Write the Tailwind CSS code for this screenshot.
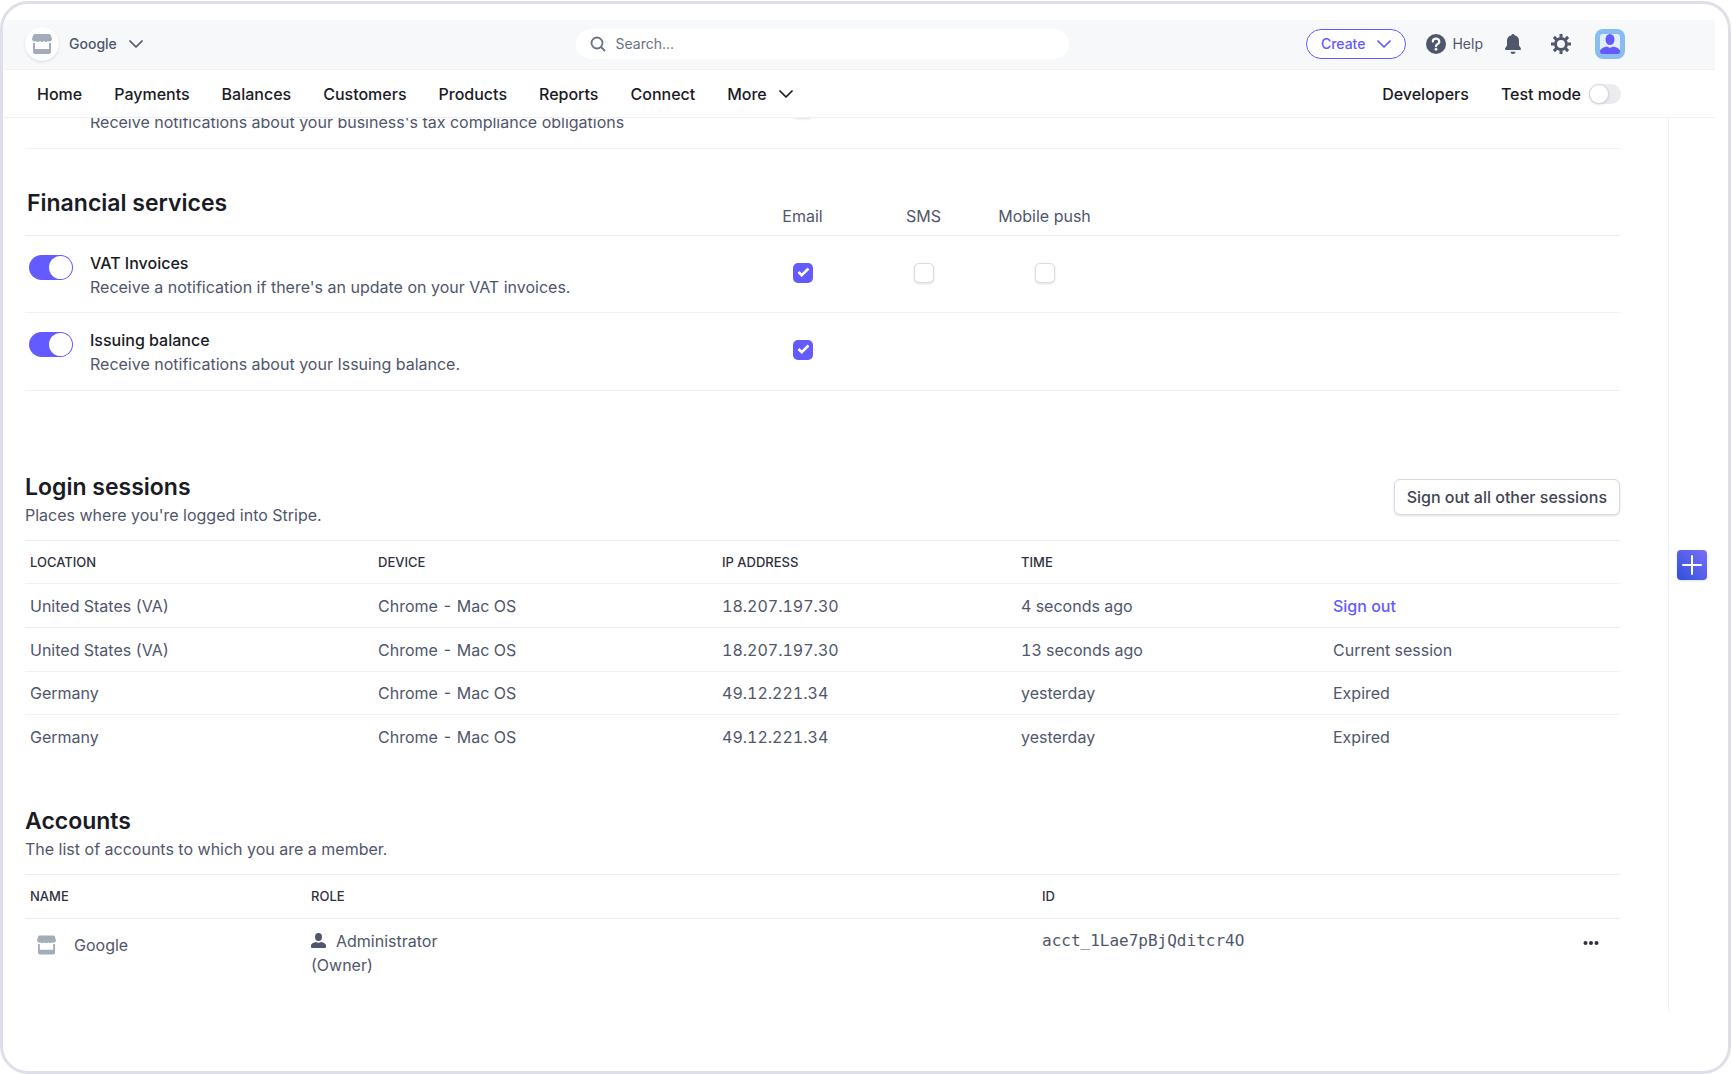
<!DOCTYPE html>
<html lang="en">
<head>
    <meta charset="UTF-8">
    <meta name="viewport" content="width=device-width, initial-scale=1.0">
    <title>Profile settings</title>
    <script src="https://cdn.jsdelivr.net/npm/@tailwindcss/browser@4"></script>
</head>
<body class="bg-white font-['Inter',sans-serif] text-base text-[#50566b]">

    <!-- Window frame -->
    <div class="min-h-screen pt-px pr-px flex">
        <div class="flex-1 flex flex-col border-3 border-[#dfdfe9] rounded-[28px] pt-4 pr-[13px] pb-[60px] overflow-hidden">

            <!-- Top bar -->
            <header class="h-[50px] grid grid-cols-[1fr_493px_1fr] items-center bg-[#f6f8fa] border-b border-[#f0f2f5] pl-4 pr-[90px] pb-px">
                <div class="flex items-center pl-1.5">
                    <span class="w-[34px] h-[34px] rounded-full bg-white shadow flex items-center justify-center">
                        <svg class="w-5 h-5" viewBox="0 0 20 20" fill="#a3acb9"><path d="M3 0h14a2 2 0 0 1 1.900 1.500L20 5a2.500 2.500 0 0 1-4 2 2.800 2.800 0 0 1-4 0 2.800 2.800 0 0 1-4 0 2.800 2.800 0 0 1-4 0 2.500 2.500 0 0 1-4-2l1.100-3.500A2 2 0 0 1 3 0z"/><path d="M1 9h2v6h14V9h2v9a2 2 0 0 1-2 2H3a2 2 0 0 1-2-2z"/></svg>
                    </span>
                    <button type="button" class="ml-2.5 flex items-center gap-3 text-sm font-medium">
                        Google
                        <svg class="w-3.5 h-2" viewBox="0 0 14 8" fill="none" stroke="currentColor" stroke-width="1.700" stroke-linecap="round" stroke-linejoin="round"><path d="M1 1l6 6 6-6"/></svg>
                    </button>
                </div>

                <label class="h-[30px] flex items-center gap-2.5 bg-white rounded-full px-3.5">
                    <svg class="w-4 h-4 shrink-0" viewBox="0 0 16 16" fill="none" stroke="#697386" stroke-width="1.800" stroke-linecap="round"><circle cx="7" cy="7" r="5.500"/><path d="M11.500 11.500L14.500 14.500"/></svg>
                    <input type="text" aria-label="Search" placeholder="Search..." class="flex-1 min-w-0 text-sm outline-none placeholder:text-[#697386]">
                </label>

                <div class="flex items-center justify-end">
                    <button type="button" class="h-[30px] px-3.5 flex items-center gap-3 rounded-full border border-[#635bff] bg-white text-sm font-medium text-[#635bff]">
                        Create
                        <svg class="w-3.5 h-2" viewBox="0 0 14 8" fill="none" stroke="currentColor" stroke-width="1.700" stroke-linecap="round" stroke-linejoin="round"><path d="M1 1l6 6 6-6"/></svg>
                    </button>
                    <button type="button" class="ml-5 flex items-center gap-1.5 text-sm">
                        <svg class="w-5 h-5" viewBox="0 0 20 20"><circle cx="10" cy="10" r="10" fill="#50566b"/><path d="M6.800 7.600a3.200 3 0 1 1 4.600 2.700c-.9.500-1.400.9-1.400 1.900" fill="none" stroke="#fff" stroke-width="2.200" stroke-linecap="round"/><circle cx="10" cy="15.300" r="1.400" fill="#fff"/></svg>
                        Help
                    </button>
                    <button type="button" aria-label="Notifications" class="ml-5">
                        <svg class="w-5 h-5" viewBox="0 0 20 20" fill="#50566b"><path d="M10 0a1.500 1.500 0 0 1 1.500 1.200A5.800 5.800 0 0 1 16 7v4.500l1.700 2.600c.6.900.1 1.900-.9 1.900H3.200c-1 0-1.500-1-.9-1.900L4 11.500V7a5.800 5.800 0 0 1 4.500-5.800A1.500 1.500 0 0 1 10 0z"/><path d="M7.500 17.800h5a2.500 2.200 0 0 1-5 0z"/></svg>
                    </button>
                    <button type="button" aria-label="Settings" class="ml-7">
                        <svg class="w-5 h-5" viewBox="0 0 20 20" fill="none" stroke="#50566b"><circle cx="10" cy="10" r="5.500" stroke-width="3"/><path d="M10 0v3.500M10 16.500V20M0 10h3.500M16.500 10H20M2.900 2.900l2.500 2.500M14.600 14.600l2.500 2.500M2.900 17.100l2.500-2.500M14.600 5.400l2.500-2.500" stroke-width="3"/></svg>
                    </button>
                    <button type="button" aria-label="Account" class="ml-6 w-[30px] h-[30px] rounded-lg bg-[#87bdf0] flex items-center justify-center">
                        <svg class="w-5 h-5" viewBox="0 0 20 20"><rect width="20" height="20" rx="3" fill="#e3eefb"/><ellipse cx="10" cy="5.500" rx="4.500" ry="5.500" fill="#635bff"/><path d="M0 16.500C1 14 4.500 13 7 12.500c1.500 1.500 4.500 1.500 6 0 2.500.5 6 1.500 7 4V18a2 2 0 0 1-2 2H2a2 2 0 0 1-2-2z" fill="#635bff"/></svg>
                    </button>
                </div>
            </header>

            <!-- Navigation -->
            <nav class="h-12 flex items-center justify-between pl-[34px] pr-[94px] border-b border-[#f0f1f4] font-medium text-[#1a1b25]">
                <div class="flex items-center gap-8">
                    <a href="#">Home</a>
                    <a href="#">Payments</a>
                    <a href="#">Balances</a>
                    <a href="#">Customers</a>
                    <a href="#">Products</a>
                    <a href="#">Reports</a>
                    <a href="#">Connect</a>
                    <button type="button" class="flex items-center gap-3">
                        More
                        <svg class="w-3.5 h-2" viewBox="0 0 14 8" fill="none" stroke="currentColor" stroke-width="1.700" stroke-linecap="round" stroke-linejoin="round"><path d="M1 1l6 6 6-6"/></svg>
                    </button>
                </div>
                <div class="flex items-center gap-8">
                    <a href="#">Developers</a>
                    <label class="flex items-center gap-2">
                        Test mode
                        <input type="checkbox" role="switch" class="appearance-none w-8 h-5 rounded-full bg-[#ebebf0] before:block before:w-5 before:h-5 before:rounded-full before:bg-white before:border before:border-[#d5d6de] before:shadow-sm">
                    </label>
                </div>
            </nav>

            <div class="flex-1 flex">
                <main class="flex-1 pl-[22px] pr-12 overflow-hidden">

                    <!-- Notifications -->
                    <section class="-mt-[47px]">
                        <div class="h-[78px] grid grid-cols-[65px_652px_121px_121px_121px] border-b border-[#f0f1f4]">
                            <input type="checkbox" role="switch" aria-label="Tax compliance" checked class="appearance-none ml-1 mt-[19px] w-11 h-[25px] p-px rounded-full bg-[#635bff] flex justify-end before:block before:w-[23px] before:h-[23px] before:rounded-full before:bg-white">
                            <p class="pt-[39px] leading-6">Receive notifications about your business's tax compliance obligations</p>
                            <input type="checkbox" aria-label="Tax compliance by email" class="appearance-none justify-self-center mt-[27px] w-5 h-5 rounded-[5px] border border-[#dcdde3] bg-white shadow-sm">
                        </div>

                        <div class="h-[87px] grid grid-cols-[717px_121px_121px_121px] border-b border-[#ebeef1]">
                            <h2 class="pl-0.5 pt-[38px] text-[23px] leading-8 font-semibold text-[#1a1b25]">Financial services</h2>
                            <span class="pt-[55px] text-center">Email</span>
                            <span class="pt-[55px] text-center">SMS</span>
                            <span class="pt-[55px] text-center">Mobile push</span>
                        </div>

                        <div class="h-[77px] grid grid-cols-[65px_652px_121px_121px_121px] border-b border-[#f0f1f4]">
                            <input id="vat" type="checkbox" role="switch" checked class="appearance-none ml-1 mt-[19px] w-11 h-[25px] p-px rounded-full bg-[#635bff] flex justify-end before:block before:w-[23px] before:h-[23px] before:rounded-full before:bg-white">
                            <div class="pt-[15px] leading-6">
                                <label for="vat" class="font-medium text-[#1a1b25]">VAT Invoices</label>
                                <p>Receive a notification if there's an update on your VAT invoices.</p>
                            </div>
                            <span class="justify-self-center mt-[27px] grid w-5 h-5">
                                <input type="checkbox" aria-label="VAT Invoices by email" checked class="appearance-none col-start-1 row-start-1 w-5 h-5 rounded-[5px] bg-[#635bff]">
                                <svg class="col-start-1 row-start-1 w-5 h-5 pointer-events-none" viewBox="0 0 20 20" fill="none" stroke="#fff" stroke-width="2.500"><path d="M5.500 9l3.200 3.200L15.500 5.500"/></svg>
                            </span>
                            <input type="checkbox" aria-label="VAT Invoices by SMS" class="appearance-none justify-self-center mt-[27px] w-5 h-5 rounded-[5px] border border-[#dcdde3] bg-white shadow-sm">
                            <input type="checkbox" aria-label="VAT Invoices by mobile push" class="appearance-none justify-self-center mt-[27px] w-5 h-5 rounded-[5px] border border-[#dcdde3] bg-white shadow-sm">
                        </div>

                        <div class="h-[78px] grid grid-cols-[65px_652px_121px_121px_121px] border-b border-[#f0f1f4]">
                            <input id="issuing" type="checkbox" role="switch" checked class="appearance-none ml-1 mt-[19px] w-11 h-[25px] p-px rounded-full bg-[#635bff] flex justify-end before:block before:w-[23px] before:h-[23px] before:rounded-full before:bg-white">
                            <div class="pt-[15px] leading-6">
                                <label for="issuing" class="font-medium text-[#1a1b25]">Issuing balance</label>
                                <p>Receive notifications about your Issuing balance.</p>
                            </div>
                            <span class="justify-self-center mt-[27px] grid w-5 h-5">
                                <input type="checkbox" aria-label="Issuing balance by email" checked class="appearance-none col-start-1 row-start-1 w-5 h-5 rounded-[5px] bg-[#635bff]">
                                <svg class="col-start-1 row-start-1 w-5 h-5 pointer-events-none" viewBox="0 0 20 20" fill="none" stroke="#fff" stroke-width="2.500"><path d="M5.500 9l3.200 3.200L15.500 5.500"/></svg>
                            </span>
                        </div>
                    </section>

                    <!-- Login sessions -->
                    <section class="mt-20">
                        <div class="flex items-start justify-between pb-[13px]">
                            <div>
                                <h2 class="text-[23px] leading-8 font-semibold text-[#1a1b25]">Login sessions</h2>
                                <p class="leading-6">Places where you're logged into Stripe.</p>
                            </div>
                            <button type="button" class="mt-2 h-9 px-3 rounded-md border border-[#d8dae0] bg-white shadow-sm font-medium text-[#414552]">Sign out all other sessions</button>
                        </div>
                        <table class="w-full table-fixed text-left">
                            <thead>
                                <tr class="h-[43px] border-t border-[#ebeef1] text-[13px] text-[#30313d]">
                                    <th class="w-[348px] pl-[5px] pt-0.5 font-medium">LOCATION</th>
                                    <th class="w-[344px] pl-[5px] pt-0.5 font-medium">DEVICE</th>
                                    <th class="w-[299px] pl-[5px] pt-0.5 font-medium">IP ADDRESS</th>
                                    <th class="w-[312px] pl-[5px] pt-0.5 font-medium">TIME</th>
                                    <th></th>
                                </tr>
                            </thead>
                            <tbody class="tabular-nums">
                                <tr class="h-11 border-t border-[#f0f1f4]">
                                    <td class="pl-[5px]">United States (VA)</td>
                                    <td class="pl-[5px]">Chrome - Mac OS</td>
                                    <td class="pl-[5px]">18.207.197.30</td>
                                    <td class="pl-[5px]">4 seconds ago</td>
                                    <td class="pl-[5px]"><a href="#" class="font-medium text-[#635bff]">Sign out</a></td>
                                </tr>
                                <tr class="h-11 border-t border-[#ebeef1]">
                                    <td class="pl-[5px]">United States (VA)</td>
                                    <td class="pl-[5px]">Chrome - Mac OS</td>
                                    <td class="pl-[5px]">18.207.197.30</td>
                                    <td class="pl-[5px]">13 seconds ago</td>
                                    <td class="pl-[5px]">Current session</td>
                                </tr>
                                <tr class="h-[43px] border-t border-[#f0f1f4]">
                                    <td class="pl-[5px]">Germany</td>
                                    <td class="pl-[5px]">Chrome - Mac OS</td>
                                    <td class="pl-[5px]">49.12.221.34</td>
                                    <td class="pl-[5px]">yesterday</td>
                                    <td class="pl-[5px]">Expired</td>
                                </tr>
                                <tr class="h-11 border-t border-[#f0f1f4]">
                                    <td class="pl-[5px]">Germany</td>
                                    <td class="pl-[5px]">Chrome - Mac OS</td>
                                    <td class="pl-[5px]">49.12.221.34</td>
                                    <td class="pl-[5px]">yesterday</td>
                                    <td class="pl-[5px]">Expired</td>
                                </tr>
                            </tbody>
                        </table>
                    </section>

                    <!-- Accounts -->
                    <section class="mt-[46px]">
                        <div class="pb-[13px]">
                            <h2 class="text-[23px] leading-8 font-semibold text-[#1a1b25]">Accounts</h2>
                            <p class="leading-6">The list of accounts to which you are a member.</p>
                        </div>
                        <table class="w-full table-fixed text-left">
                            <thead>
                                <tr class="h-11 border-t border-[#ebeef1] text-[13px] text-[#30313d]">
                                    <th class="w-[281px] pl-[5px] pt-0.5 font-medium">NAME</th>
                                    <th class="w-[731px] pl-[5px] pt-0.5 font-medium">ROLE</th>
                                    <th class="pl-[5px] pt-0.5 font-medium">ID</th>
                                    <th class="w-[60px]"></th>
                                </tr>
                            </thead>
                            <tbody>
                                <tr class="border-t border-[#ebeef1] align-top leading-6">
                                    <td class="pt-3.5 pl-3">
                                        <div class="flex items-center gap-[18px]">
                                            <svg class="w-[19px] h-5" viewBox="0 0 20 20" fill="#a3acb9"><path d="M3 0h14a2 2 0 0 1 1.900 1.500L20 5a2.500 2.500 0 0 1-4 2 2.800 2.800 0 0 1-4 0 2.800 2.800 0 0 1-4 0 2.800 2.800 0 0 1-4 0 2.500 2.500 0 0 1-4-2l1.100-3.500A2 2 0 0 1 3 0z"/><path d="M1 9h2v6h14V9h2v9a2 2 0 0 1-2 2H3a2 2 0 0 1-2-2z"/></svg>
                                            Google
                                        </div>
                                    </td>
                                    <td class="pt-2.5 pl-[5px]">
                                        <div class="flex items-center gap-2.5">
                                            <svg class="w-[15px] h-[15px]" viewBox="0 0 15 15" fill="#50566b"><ellipse cx="7.500" cy="4" rx="3.500" ry="4"/><path d="M0 12.500c0-2 2.500-3 5-3.500 1.500 1 3.500 1 5 0 2.500.5 5 1.500 5 3.500V14a1 1 0 0 1-1 1H1a1 1 0 0 1-1-1z"/></svg>
                                            Administrator
                                        </div>
                                        (Owner)
                                    </td>
                                    <td class="pt-2.5 pl-[5px] font-['DejaVu_Sans_Mono',monospace]">acct_1Lae7pBjQditcr4O</td>
                                    <td class="pt-3 pl-[23px]">
                                        <button type="button" aria-label="More actions" class="flex h-6 items-center">
                                            <svg class="w-4 h-4" viewBox="0 0 16 16" fill="#30313d"><circle cx="2.500" cy="8" r="2"/><circle cx="8" cy="8" r="2"/><circle cx="13.500" cy="8" r="2"/></svg>
                                        </button>
                                    </td>
                                </tr>
                            </tbody>
                        </table>
                    </section>
                </main>

                <!-- Side rail -->
                <aside class="w-[47px] flex items-center justify-center border-l border-[#f0f1f4]">
                    <button type="button" aria-label="Add" class="w-[30px] h-[30px] rounded bg-linear-to-tr from-[#2a50dc] to-[#7b6ff8] flex items-center justify-center shadow-sm">
                        <svg class="w-5 h-5" viewBox="0 0 20 20" fill="none" stroke="#fff" stroke-width="2" stroke-linecap="round"><path d="M10 1v18M1 10h18"/></svg>
                    </button>
                </aside>
            </div>
        </div>
    </div>

</body>
</html>
